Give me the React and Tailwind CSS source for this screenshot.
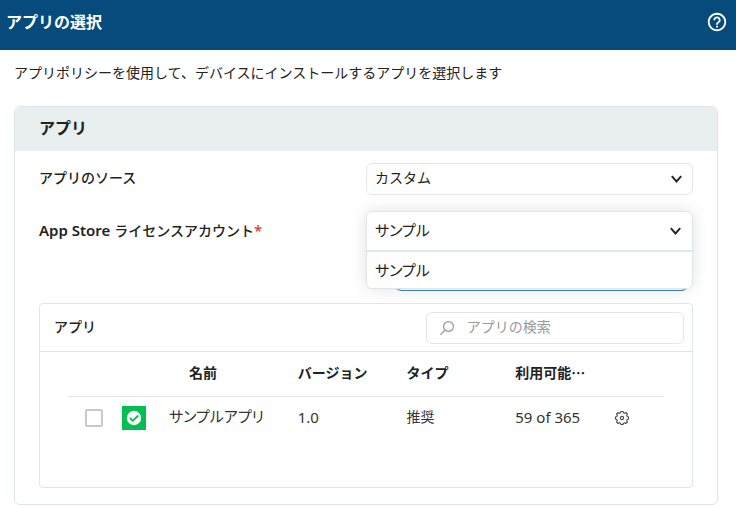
const MENU_TEXT = "text-[15px] [font-feature-settings:'palt']";

const APPS = [
  { id: 1, name: 'サンプルアプリ', version: '1.0', type: '推奨', available: '59 of 365' },
];

function HelpIcon() {
  return (
    <svg className="w-[22px] h-[22px]" viewBox="0 0 24 24" fill="currentColor" aria-hidden="true">
      <path d="M11 18h2v-2h-2v2zm1-16C6.48 2 2 6.48 2 12s4.48 10 10 10 10-4.480 10-10S17.520 2 12 2zm0 18c-4.410 0-8-3.590-8-8s3.590-8 8-8 8 3.590 8 8-3.590 8-8 8zm0-14c-2.210 0-4 1.790-4 4h2c0-1.100.9-2 2-2s2 .9 2 2c0 2-3 1.750-3 5h2c0-2.250 3-2.500 3-5 0-2.210-1.790-4-4-4z" />
    </svg>
  );
}

function ChevronIcon() {
  return (
    <svg
      className="absolute right-2.5 top-1/2 -translate-y-1/2 w-3 h-3 pointer-events-none"
      viewBox="0 0 12 12"
      fill="none"
      stroke="#222"
      strokeWidth="1.900"
      aria-hidden="true"
    >
      <path d="M.8 3.200l4.700 5.300 4.700-5.300" />
    </svg>
  );
}

function SearchIcon() {
  return (
    <svg className="w-4 h-4 shrink-0" viewBox="0 0 16 16" fill="none" stroke="#999" strokeWidth="1.200" aria-hidden="true">
      <circle cx="9.500" cy="6.500" r="4.900" />
      <path d="M6 10l-4.500 4.500" />
    </svg>
  );
}

function AppIcon() {
  return (
    <svg className="block w-6 h-6" viewBox="0 0 24 24" aria-hidden="true">
      <rect width="24" height="24" fill="#00c150" />
      <circle cx="12" cy="12" r="7.200" fill="#fff" />
      <path d="M7.800 12l3 2.800 5.400-5.300" fill="none" stroke="#00c150" strokeWidth="1.800" />
    </svg>
  );
}

function GearIcon() {
  return (
    <svg className="block w-4 h-4" viewBox="0 0 16 16" fill="none" stroke="#444" strokeWidth="1.100" strokeLinejoin="round" aria-hidden="true">
      <path d="M6.600 2.700L7 1.500h2l.4 1.200 1.400.6 1.200-.7 1.400 1.400-.7 1.200.6 1.400 1.200.4v2l-1.200.4-.6 1.400.7 1.200-1.400 1.400-1.200-.7-1.400.6L9 14.500H7l-.4-1.200-1.400-.6-1.200.7L2.600 12l.7-1.200-.6-1.400L1.500 9V7l1.200-.4.6-1.400L2.600 4 4 2.600l1.200.7z" />
      <circle cx="8" cy="8" r="1.600" />
    </svg>
  );
}

function AppTable({ apps }) {
  return (
    <table className="w-full table-fixed text-left text-sm">
      <colgroup>
        <col className="w-[50px]" />
        <col className="w-[45px]" />
        <col />
        <col />
        <col />
        <col />
        <col className="w-[66px]" />
      </colgroup>
      <thead>
        <tr className="h-11 border-b border-[#e3e6e8] text-[#222]">
          <td />
          <td />
          <th className="pl-[26px] pb-0.5 font-bold">名前</th>
          <th className="pl-[26px] pb-0.5 font-bold">バージョン</th>
          <th className="pl-[26px] pb-0.5 font-bold">タイプ</th>
          <th className="pl-[26px] pb-0.5 font-bold whitespace-nowrap">利用可能⋯</th>
          <td />
        </tr>
      </thead>
      <tbody>
        {apps.map(app => (
          <tr key={app.id} className="h-11 text-[#333]">
            <td className="pl-[17px]">
              <input
                type="checkbox"
                aria-label={app.name}
                className="block appearance-none w-[18px] h-[18px] border-2 border-[#c8c8c8] rounded-xs bg-white"
              />
            </td>
            <td className="pl-1">
              <AppIcon />
            </td>
            <td className="pl-1.5 pb-1 whitespace-nowrap">
              <span className={MENU_TEXT}>{app.name}</span>
            </td>
            <td className="pl-[26px] pb-0.5 text-[15px]">{app.version}</td>
            <td className="pl-[26px] pb-0.5">{app.type}</td>
            <td className="pl-[26px] pb-0.5 text-[15px] whitespace-nowrap">{app.available}</td>
            <td className="pl-4">
              <button type="button" aria-label="設定" className="block">
                <GearIcon />
              </button>
            </td>
          </tr>
        ))}
      </tbody>
    </table>
  );
}

function App() {
  return (
    <div className="bg-white text-[#222] font-['Noto_Sans','Noto_Sans_CJK_JP',sans-serif]">
      <header className="flex items-center justify-between h-[50px] pl-1.5 pr-2 pb-1.5 bg-[#064b7b] text-white">
        <h1 className="text-base font-bold">アプリの選択</h1>
        <button type="button" aria-label="ヘルプ">
          <HelpIcon />
        </button>
      </header>

      <main className="pl-3.5 pr-[18px] pt-3">
        <p className="text-sm leading-[22px]">
          アプリポリシーを使用して、デバイスにインストールするアプリを選択します
        </p>

        <section className="mt-[22px] border border-[#e0e5e7] rounded-md">
          <h2 className="h-11 pl-6 leading-[42px] text-base font-bold bg-[#e9eeee] rounded-t-md">アプリ</h2>

          <div className="px-6 pt-3 pb-4">
            <div className="flex items-start justify-between h-8">
              <label htmlFor="source" className="text-sm leading-[30px] font-medium">アプリのソース</label>
              <div className="relative w-1/2 h-8">
                <select
                  id="source"
                  className="block w-full h-8 pl-2 pr-8 pb-0.5 text-sm border border-[#e3e6e8] rounded-md bg-white appearance-none"
                >
                  <option>カスタム</option>
                </select>
                <ChevronIcon />
              </div>
            </div>

            <div className="flex items-start justify-between h-[92px] mt-4">
              <label htmlFor="account" className="text-sm leading-[38px] font-medium">
                <span className="text-[15px] font-semibold">App Store </span>
                ライセンスアカウント
                <span className="text-[15px] text-[#d0402b]">*</span>
              </label>
              <div className="relative w-1/2">
                <div className="ml-7 mr-1 h-20 border-b border-[#3f86bd] rounded-lg" />
                <div className="absolute inset-x-0 top-0 border border-[#e0e5e7] rounded-md bg-white shadow-[0_0_16px_rgba(0,0,0,0.12)]">
                  <div className="relative">
                    <select
                      id="account"
                      className={`block w-full h-[38px] pl-2 pr-8 pb-0.5 rounded-t-md appearance-none ${MENU_TEXT}`}
                    >
                      <option>サンプル</option>
                    </select>
                    <ChevronIcon />
                  </div>
                  <ul role="listbox" aria-label="App Store ライセンスアカウント" className="border-t-2 border-[#e0e5e8]">
                    <li
                      role="option"
                      aria-selected="true"
                      className={`h-9 pl-2 leading-9 ${MENU_TEXT}`}
                    >
                      サンプル
                    </li>
                  </ul>
                </div>
              </div>
            </div>

            <div className="border border-[#e0e5e7] rounded-sm">
              <div className="flex items-center justify-between h-12 pl-3.5 pr-2 border-b border-[#e3e6e8]">
                <h3 className="pb-0.5 text-sm font-medium">アプリ</h3>
                <div className="flex items-center gap-3 w-[41%] h-8 pl-3 border border-[#e3e6e8] rounded-md">
                  <SearchIcon />
                  <input
                    type="text"
                    aria-label="アプリの検索"
                    placeholder="アプリの検索"
                    className="w-full pb-0.5 text-sm placeholder:text-[#999] outline-none"
                  />
                </div>
              </div>
              <div className="px-7 pb-[47px]">
                <AppTable apps={APPS} />
              </div>
            </div>
          </div>
        </section>
      </main>
    </div>
  );
}

export default App;
